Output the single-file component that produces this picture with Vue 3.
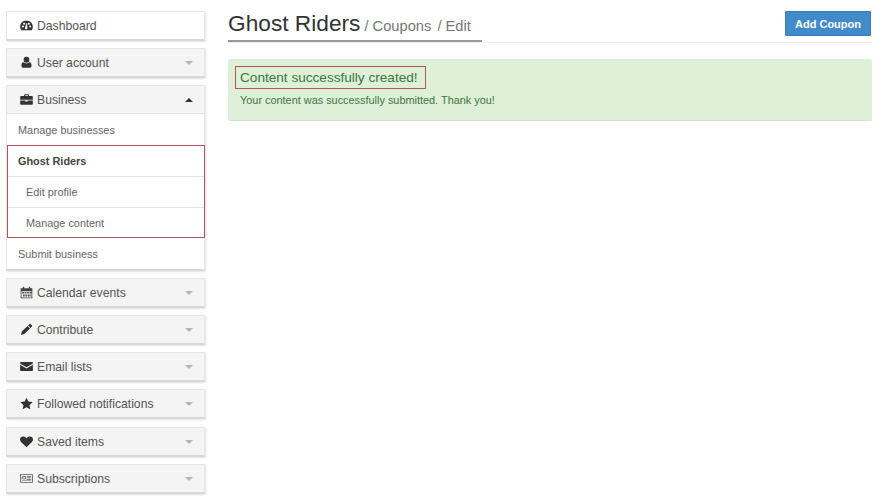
<template>
  <div class="page">
    <aside class="sidebar">
      <div v-for="item in menu" :key="item.label" class="panel" :class="{ plain: item.plain }">
        <div class="panel-head">
          <svg class="icon" viewBox="0 0 16 16" v-html="item.icon"></svg>
          <span class="panel-label">{{ item.label }}</span>
          <span v-if="item.caret" class="caret" :class="item.caret"></span>
        </div>
        <div v-if="item.open" class="panel-body">
          <a class="link">Manage businesses</a>
          <div class="selected">
            <a class="link strong">Ghost Riders</a>
            <a class="link sub">Edit profile</a>
            <a class="link sub">Manage content</a>
          </div>
          <a class="link">Submit business</a>
        </div>
      </div>
    </aside>

    <main class="content">
      <header class="page-header">
        <div class="title">
          <h1>Ghost Riders</h1>
          <small>/ Coupons</small>
          <small>/ Edit</small>
        </div>
        <button class="add-btn">Add Coupon</button>
      </header>

      <section class="alert">
        <h4>Content successfully created!</h4>
        <p>Your content was successfully submitted. Thank you!</p>
      </section>
    </main>
  </div>
</template>

<script setup>
const icons = {
  dashboard:
    '<path fill-rule="evenodd" d="M8 1.800C3.600 1.800.2 5.200.2 9.400c0 1.700.5 3.200 1.400 4.500h12.800c.9-1.300 1.400-2.800 1.400-4.500 0-4.200-3.400-7.600-7.800-7.600zM3.500 10.600a1.300 1.300 0 1 1 0-2.600 1.300 1.300 0 0 1 0 2.600zm1.600-3.400a1.300 1.300 0 1 1 0-2.600 1.300 1.300 0 0 1 0 2.600zm4 4.700a1.600 1.600 0 0 1-2.900-1.300L8.200 5l.7.100-.1 5c.5.400.6 1.200.3 1.800zm3.400-1.300a1.300 1.300 0 1 1 0-2.600 1.300 1.300 0 0 1 0 2.600zm-1.600-3.400a1.300 1.300 0 1 1 0-2.600 1.300 1.300 0 0 1 0 2.600z"/>',
  user:
    '<path d="M8 .8a3.500 3.500 0 0 1 3.500 3.700A3.500 3.500 0 0 1 8 8.200a3.500 3.500 0 0 1-3.500-3.700A3.500 3.500 0 0 1 8 .8zM4.300 7.800C5.300 8.700 6.600 9.200 8 9.200s2.700-.5 3.700-1.400c1.700.2 2.500 1.700 2.500 4.100 0 1.700-1 2.700-2.400 2.700H4.200c-1.400 0-2.400-1-2.400-2.700 0-2.400.8-3.900 2.500-4.100z"/>',
  briefcase:
    '<path fill-rule="evenodd" d="M5 3.800V2.400c0-.6.500-1 1-1h4c.5 0 1 .4 1 1v1.400h3.800c.5 0 1 .4 1 1v3.400H.2V4.800c0-.6.5-1 1-1H5zm1.200 0h3.600V2.700H6.200v1.100zM.2 9.200h6.300v1.300h3V9.200h6.300v4.400c0 .5-.5 1-1 1H1.200c-.5 0-1-.5-1-1V9.200z"/>',
  calendar:
    '<path fill="#444" fill-rule="evenodd" d="M.8 2.800h2.700V.8h1.700v2h5.600v-2h1.700v2h2.700v12.400H.8V2.800zm1 3.700v7.700h12.400V6.500H1.800zm1 1h2v1.800h-2V7.500zm3 0h2v1.800h-2V7.500zm3 0h2v1.800h-2V7.500zm3 0h2.200v1.800h-2.200V7.500zm-8 3h2v2.300h-2v-2.300zm3 0h2v2.300h-2v-2.300zm3 0h2v2.300h-2v-2.300zm3 0h2.200v2.300h-2.200v-2.300z"/>',
  pencil:
    '<path d="M11.600 1.400c.5-.5 1.200-.5 1.700 0l1.300 1.300c.5.500.5 1.200 0 1.700l-1.600 1.600-3-3 1.600-1.600zM9.300 3.700l3 3-7 6.900-4.100 1.200 1-4.200 7.100-6.900z"/>',
  envelope:
    '<path d="M1 2.500h14c.6 0 .9.400.9 1v.7L8 8.900.1 4.200v-.7c0-.6.3-1 .9-1zM.1 5.800 8 10.600l7.900-4.800v6.700c0 .6-.3 1-.9 1H1c-.6 0-.9-.4-.9-1V5.800z"/>',
  star:
    '<path d="m8 .8 2.300 4.800 5.300.7-3.900 3.700 1 5.200L8 12.700l-4.700 2.500 1-5.200L.4 6.300l5.300-.7z"/>',
  heart:
    '<path d="M8 15 1.600 8.800C.6 7.800 0 6.700 0 5.300 0 3.100 1.700 1.700 3.900 1.700 5.500 1.700 7 2.500 8 3.900c1-1.400 2.500-2.200 4.100-2.200 2.200 0 3.900 1.400 3.900 3.600 0 1.400-.6 2.500-1.600 3.500L8 15z"/>',
  card:
    '<path fill="#555" fill-rule="evenodd" d="M.8 2.800h14.400c.5 0 .8.300.8.800v8.800c0 .5-.3.800-.8.800H.8c-.5 0-.8-.3-.8-.8V3.600c0-.5.3-.8.800-.8zm.2.900v8.600h14V3.700H1zM2.200 5h4.900v3.800H2.200V5zm.9.800V8h3.100V5.800H3.100zM8.300 5h5.500v.8H8.300V5zm0 1.800h5.500v.8H8.300v-.8zm0 1.800h5.500v.8H8.300v-.8zm-6.100 1.400h5.900v.8H2.200V10zm6.100 0h5.500v.8H8.300V10z"/>'
}

const menu = [
  { label: 'Dashboard', icon: icons.dashboard, plain: true },
  { label: 'User account', icon: icons.user, caret: 'down' },
  { label: 'Business', icon: icons.briefcase, caret: 'up', open: true },
  { label: 'Calendar events', icon: icons.calendar, caret: 'down' },
  { label: 'Contribute', icon: icons.pencil, caret: 'down' },
  { label: 'Email lists', icon: icons.envelope, caret: 'down' },
  { label: 'Followed notifications', icon: icons.star, caret: 'down' },
  { label: 'Saved items', icon: icons.heart, caret: 'down' },
  { label: 'Subscriptions', icon: icons.card, caret: 'down' }
]
</script>

<style>
html,
body {
  margin: 0;
  background: #fff;
  overflow: hidden;
}
</style>

<style scoped>
.page {
  width: 881px;
  height: 500px;
  display: flex;
  align-items: flex-start;
  font-family: "Liberation Sans", Arial, sans-serif;
  color: #555;
  overflow: hidden;
  box-sizing: border-box;
  padding: 11px 9px 0 6px;
}

.sidebar {
  width: 199px;
  flex-shrink: 0;
  display: flex;
  flex-direction: column;
  gap: 7px;
}

.panel {
  background: #fff;
  border: 1px solid #e6e6e6;
  border-bottom: 2px solid #d8d8d8;
  box-shadow: 1px 1px 2px rgba(0, 0, 0, 0.12);
}

.panel:nth-child(8) {
  margin-top: 1px;
}

.panel-head {
  height: 27px;
  display: flex;
  align-items: center;
  padding: 0 8px 0 13px;
  background: #f4f4f4;
  font-size: 12.2px;
}

.plain .panel-head {
  background: #fff;
}

.panel-body {
  border-top: 1px solid #e4e4e4;
  padding-top: 1px;
}

.icon {
  width: 13px;
  height: 13px;
  margin-right: 4px;
  fill: #333;
  flex-shrink: 0;
}

.panel-label {
  flex: 1;
}

.caret {
  width: 0;
  height: 0;
  margin-right: 3px;
  border-left: 4px solid transparent;
  border-right: 4px solid transparent;
}

.caret.down {
  border-top: 4px solid #b4b4b4;
}

.caret.up {
  border-bottom: 4px solid #333;
}

.link {
  display: block;
  height: 30px;
  line-height: 30px;
  padding-left: 11px;
  font-size: 10.9px;
  color: #666;
}

.selected {
  margin: 0 -1px 1px 0;
  border: 1px solid #b5545f;
}

.strong {
  padding-left: 10px;
  font-weight: 700;
  color: #444;
  border-bottom: 1px solid #e4e4e4;
}

.sub {
  padding-left: 18px;
}

.sub + .sub {
  height: 29px;
  border-top: 1px solid #e4e4e4;
}

.content {
  flex: 1;
  min-width: 0;
  margin-left: 23px;
}

.page-header {
  position: relative;
  height: 31px;
  display: flex;
  justify-content: space-between;
  align-items: flex-start;
  border-bottom: 1px solid #eee;
}

.title {
  height: 32px;
  padding-right: 11px;
  display: flex;
  align-items: baseline;
  gap: 4px;
  border-bottom: 2px solid #999;
  box-sizing: border-box;
  margin-top: -1px;
  white-space: nowrap;
}

h1 {
  margin: 0;
  font-size: 22.7px;
  line-height: 26px;
  font-weight: 400;
  color: #333;
}

small {
  font-size: 14.7px;
  color: #777;
}

small + small {
  margin-left: 2px;
}

.add-btn {
  width: 86px;
  height: 25px;
  margin-right: 1px;
  padding: 0;
  border: 1px solid #3a7ab5;
  border-radius: 1px;
  background: #428bca;
  color: #fff;
  font-family: inherit;
  font-size: 11px;
  font-weight: 700;
}

.alert {
  margin-top: 16px;
  height: 62px;
  padding: 7px 12px;
  box-sizing: border-box;
  background: #dff0d8;
  border-bottom: 1px solid #d2e2cb;
  border-radius: 2px;
  color: #3c763d;
}

h4 {
  display: inline-block;
  margin: 0 0 5px -5px;
  padding: 0 7px 0 4px;
  height: 21px;
  line-height: 21px;
  border: 1px solid #b5545f;
  font-size: 13.6px;
  font-weight: 400;
}

.alert p {
  margin: 0;
  font-size: 10.9px;
}
</style>
